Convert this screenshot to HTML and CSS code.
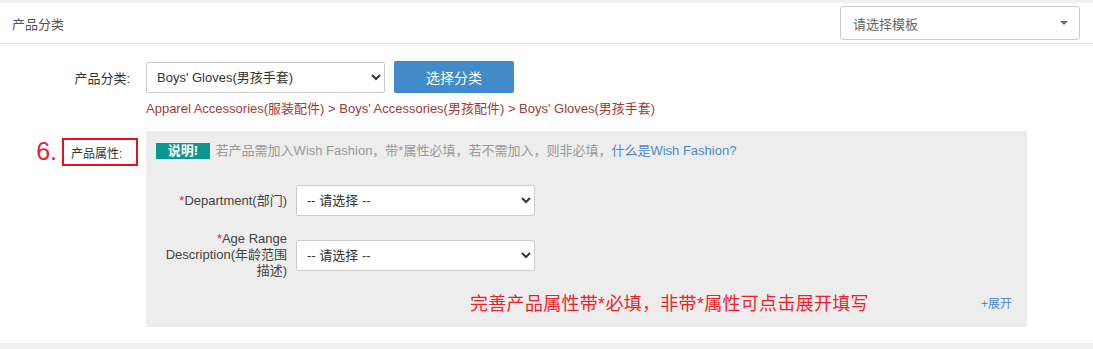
FILE: index.html
```html
<!DOCTYPE html>
<html lang="zh-CN">
<head>
    <meta charset="UTF-8">
    <title>产品分类</title>
    <link rel="stylesheet" href="styles.css">
</head>
<body>
    <div class="box">
        <div class="box-head">
            <span class="box-title">产品分类</span>
            <div class="tpl-select">
                <span>请选择模板</span>
                <span class="caret"></span>
            </div>
        </div>

        <div class="box-body">
            <div class="form-row">
                <label class="form-label">产品分类:</label>
                <select class="form-select cat-select">
                    <option>Boys' Gloves(男孩手套)</option>
                </select>
                <button class="btn-primary">选择分类</button>
            </div>
            <div class="cat-path">Apparel Accessories(服装配件) &gt; Boys' Accessories(男孩配件) &gt; Boys' Gloves(男孩手套)</div>

            <div class="attr-row">
                <div class="attr-label">
                    <span class="step-num">6.</span>
                    <span class="mark-box">产品属性:</span>
                </div>
                <div class="attr-panel">
                    <div class="notice">
                        <span class="badge">说明!</span>
                        若产品需加入Wish Fashion，带*属性必填，若不需加入，则非必填，<a class="link" href="#">什么是Wish Fashion?</a>
                    </div>

                    <div class="attr-item">
                        <label class="attr-name"><i>*</i>Department(部门)</label>
                        <select class="form-select attr-select">
                            <option>-- 请选择 --</option>
                        </select>
                    </div>
                    <div class="attr-item">
                        <label class="attr-name"><i>*</i>Age Range Description(年龄范围描述)</label>
                        <select class="form-select attr-select">
                            <option>-- 请选择 --</option>
                        </select>
                    </div>

                    <div class="attr-foot">
                        <span class="tip-red">完善产品属性带*必填，非带*属性可点击展开填写</span>
                        <a class="link expand" href="#">+展开</a>
                    </div>
                </div>
            </div>
        </div>
    </div>
</body>
</html>
```

FILE: styles.css
```css
* {
    margin: 0;
    padding: 0;
    box-sizing: border-box;
}

body {
    font-family: "Liberation Sans", Arial, "Noto Sans CJK SC", sans-serif;
    font-size: 13px;
    color: #333;
    background: #f1f1f1;
}

.box {
    margin-top: 3px;
    margin-bottom: 5px;
    background: #fff;
    padding-bottom: 16px;
}

.box-head {
    height: 41px;
    display: flex;
    justify-content: space-between;
    align-items: center;
    padding: 0 13px 0 12px;
    border-bottom: 1px solid #e3e3e3;
}

.box-title {
    color: #555;
    font-size: 13px;
}

.tpl-select {
    width: 240px;
    height: 34px;
    border: 1px solid #ccc;
    border-radius: 3px;
    display: flex;
    justify-content: space-between;
    align-items: center;
    padding: 0 11px 0 12px;
    color: #666;
}

.caret {
    width: 0;
    height: 0;
    border-left: 4px solid transparent;
    border-right: 4px solid transparent;
    border-top: 4px solid #666;
}

.box-body {
    padding-top: 17px;
}

.form-row {
    display: flex;
    align-items: center;
}

.form-label {
    width: 146px;
    text-align: right;
    padding-right: 16px;
    color: #333;
}

.form-select {
    height: 31px;
    border: 1px solid #ccc;
    border-radius: 2px;
    background: #fff;
    font-family: inherit;
    font-size: 13px;
    color: #333;
    padding-left: 6px;
}

.cat-select {
    width: 239px;
}

.btn-primary {
    width: 120px;
    height: 32px;
    margin-left: 9px;
    border: none;
    border-radius: 2px;
    background: #428bca;
    color: #fff;
    font-family: inherit;
    font-size: 14px;
}

.cat-path {
    margin: 8px 0 0 146px;
    color: #a23a37;
    line-height: 16px;
}

.attr-row {
    display: flex;
    margin-top: 14px;
}

.attr-label {
    width: 146px;
    display: flex;
    justify-content: flex-end;
    align-items: center;
    align-self: flex-start;
    margin-top: 6px;
    padding-right: 8px;
}

.step-num {
    color: #e8232a;
    font-size: 25px;
    margin-right: 5px;
}

.mark-box {
    width: 76px;
    height: 28px;
    border: 2px solid #e4141d;
    padding: 4px 0 0 7px;
    color: #333;
    font-size: 12px;
}

.attr-panel {
    width: 881px;
    background: #ededed;
    padding: 12px 10px 12px;
}

.notice {
    color: #999;
    line-height: 16px;
}

.badge {
    display: inline-block;
    width: 54px;
    background: #0a9790;
    color: #fff;
    font-weight: bold;
    text-align: center;
    margin-right: 2px;
}

.link {
    color: #4a89cf;
    text-decoration: none;
}

.attr-item {
    display: flex;
    align-items: center;
    margin-top: 26px;
}

.attr-item + .attr-item {
    margin-top: 15px;
}

.attr-name {
    width: 150px;
    margin-left: -10px;
    padding: 0 9px 0 10px;
    text-align: right;
    color: #444;
    line-height: 16px;
}

.attr-name i {
    color: #e8232a;
    font-style: normal;
}

.attr-select {
    width: 239px;
}

.attr-foot {
    display: flex;
    align-items: center;
    margin-top: 10px;
    padding: 0 5px 0 314px;
}

.tip-red {
    color: #ee1f2c;
    font-size: 18px;
    letter-spacing: 0.3px;
}

.expand {
    font-size: 12px;
    margin-left: auto;
}
```
